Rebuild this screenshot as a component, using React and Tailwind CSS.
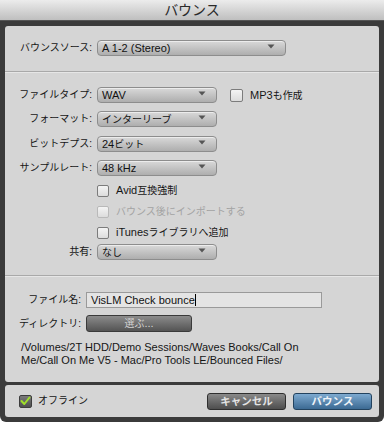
import React from "react";

const font = { fontFamily: '"Liberation Sans", "Noto Sans CJK JP", sans-serif' };

// japanese runs are set a touch smaller than latin ones
function J({ children }) {
    return <span className="text-[10px]">{children}</span>;
}

// popup menu, grey gradient with small arrow
function Select({ value, width }) {
    return (
        <div className={`relative h-[16px] ${width} rounded-[4px] border border-[#8d8d8d] bg-gradient-to-b from-[#d9d9d9] to-[#aeaeae] shadow-[inset_0_1px_0_#ececec] flex items-center pl-[4px]`}>
            <span className="text-[11px] leading-none text-[#111]">{value}</span>
            <svg className="absolute right-[10px] top-[3px]" width="8" height="5" viewBox="0 0 8 5">
                <path d="M0.5 0.5 L7.5 0.5 L4 4.5 Z" fill="#555" />
            </svg>
        </div>
    );
}

function Check({ children, disabled }) {
    return (
        <div className="flex items-center gap-[7px] h-[13px]">
            <div className={`w-[12px] h-[12px] rounded-[2px] border bg-gradient-to-b from-[#f4f4f4] to-[#dcdcdc] ${disabled ? "border-[#b9b9b9]" : "border-[#7c7c7c]"}`}></div>
            <span className={`text-[11px] leading-none ${disabled ? "text-[#a3a3a3]" : "text-[#151515]"}`}>{children}</span>
        </div>
    );
}

function Row({ label, children, className = "" }) {
    return (
        <div className={`flex items-center ${className}`}>
            <span className="w-[87px] text-right text-[10px] leading-none text-[#151515]">{label}</span>
            <div className="ml-[5px]">{children}</div>
        </div>
    );
}

export default function App() {
    return (
        <div style={font} className="w-[384px] h-[422px] bg-white">
            <div className="w-[384px] h-[422px] bg-[#3b3b3b] rounded-b-[6px] flex flex-col">
                {/* title bar */}
                <div className="h-[21px] bg-gradient-to-b from-[#ececec] to-[#bfbfbf] border-b border-[#555] flex items-center justify-center">
                    <span className="text-[14px] leading-none text-[#2a2a2a]">バウンス</span>
                </div>

                <div className="flex flex-col px-[5px] pt-[5px]">
                    {/* main panel */}
                    <div className="h-[356px] bg-[#d5d5d5] rounded-[3px] flex flex-col">
                        <div className="pt-[14px]">
                            <Row label="バウンスソース:">
                                <Select value="A 1-2 (Stereo)" width="w-[189px]" />
                            </Row>
                        </div>

                        <div className="mt-[15px] h-px bg-[#a9a9a9] shadow-[0_1px_0_#e6e6e6]"></div>

                        <div className="flex flex-col pt-[15px]">
                            <Row label="ファイルタイプ:">
                                <div className="flex items-center">
                                    <Select value="WAV" width="w-[120px]" />
                                    <div className="ml-[13px] flex items-center gap-[7px]">
                                        <div className="w-[13px] h-[13px] rounded-[2px] border border-[#7c7c7c] bg-gradient-to-b from-[#f4f4f4] to-[#dcdcdc]"></div>
                                        <span className="text-[11px] leading-none text-[#151515]">MP3<J>も作成</J></span>
                                    </div>
                                </div>
                            </Row>
                            <Row label="フォーマット:" className="mt-[8px]">
                                <Select value={<J>インターリーブ</J>} width="w-[120px]" />
                            </Row>
                            <Row label="ビットデプス:" className="mt-[9px]">
                                <Select value={<>24<J>ビット</J></>} width="w-[120px]" />
                            </Row>
                            <Row label="サンプルレート:" className="mt-[8px]">
                                <Select value="48 kHz" width="w-[120px]" />
                            </Row>
                            <div className="pl-[92px] mt-[8px] flex flex-col gap-[8px]">
                                <Check>Avid<J>互換強制</J></Check>
                                <Check disabled><J>バウンス後にインポートする</J></Check>
                                <Check>iTunes<J>ライブラリへ追加</J></Check>
                            </div>
                            <Row label="共有:" className="mt-[5px]">
                                <Select value={<J>なし</J>} width="w-[120px]" />
                            </Row>
                        </div>

                        <div className="mt-[15px] h-px bg-[#a9a9a9] shadow-[0_1px_0_#e6e6e6]"></div>

                        <div className="flex flex-col pt-[16px]">
                            <div className="flex items-center">
                                <span className="w-[76px] text-right text-[10px] leading-none text-[#151515]">ファイル名:</span>
                                <div className="ml-[5px] w-[236px] h-[16px] border border-[#9a9a9a] bg-[#e4e4e4] flex items-center pl-[4px]">
                                    <span className="text-[11px] leading-none text-[#111]">VisLM Check bounce</span>
                                    <span className="w-px h-[12px] bg-black"></span>
                                </div>
                            </div>
                            <div className="flex items-center mt-[7px]">
                                <span className="w-[76px] text-right text-[10px] leading-none text-[#151515]">ディレクトリ:</span>
                                <button className="ml-[5px] w-[106px] h-[17px] rounded-[3px] border border-[#3a3a3a] bg-gradient-to-b from-[#8c8c8c] to-[#545454] flex items-center justify-center">
                                    <span className="text-[11px] leading-none text-[#d4d4d4]"><J>選ぶ</J>...</span>
                                </button>
                            </div>
                            <div className="pl-[16px] mt-[9px] text-[11px] leading-[12.5px] text-[#151515]">
                                /Volumes/2T HDD/Demo Sessions/Waves Books/Call On<br />
                                Me/Call On Me V5 - Mac/Pro Tools LE/Bounced Files/
                            </div>
                        </div>
                    </div>

                    {/* bottom bar */}
                    <div className="mt-[3px] h-[32px] bg-[#d5d5d5] rounded-[3px] flex items-center pl-[14px] pr-[7px]">
                        <div className="flex items-center gap-[6px]">
                            <div className="w-[13px] h-[13px] rounded-[2px] border border-[#3d3d3d] bg-gradient-to-b from-[#7a7a7a] to-[#4f4f4f] flex items-center justify-center">
                                <svg width="11" height="10" viewBox="0 0 11 10">
                                    <path d="M1.5 5 L4.3 8 L9.5 1.5" fill="none" stroke="#9fe02a" strokeWidth="2" strokeLinecap="round" strokeLinejoin="round" />
                                </svg>
                            </div>
                            <span className="text-[10px] leading-none text-[#151515]">オフライン</span>
                        </div>
                        <div className="ml-auto flex items-center gap-[7px]">
                            <button className="w-[79px] h-[17px] rounded-[3px] border border-[#2f2f2f] bg-gradient-to-b from-[#8a8a8a] to-[#4e4e4e] flex items-center justify-center">
                                <span className="text-[10.5px] leading-none font-bold text-[#e4e4e4]">キャンセル</span>
                            </button>
                            <button className="w-[79px] h-[17px] rounded-[3px] border border-[#23435f] bg-gradient-to-b from-[#7eaad0] to-[#3c6a93] flex items-center justify-center">
                                <span className="text-[10.5px] leading-none font-bold text-[#eef3f8]">バウンス</span>
                            </button>
                        </div>
                    </div>
                </div>
            </div>
        </div>
    );
}
